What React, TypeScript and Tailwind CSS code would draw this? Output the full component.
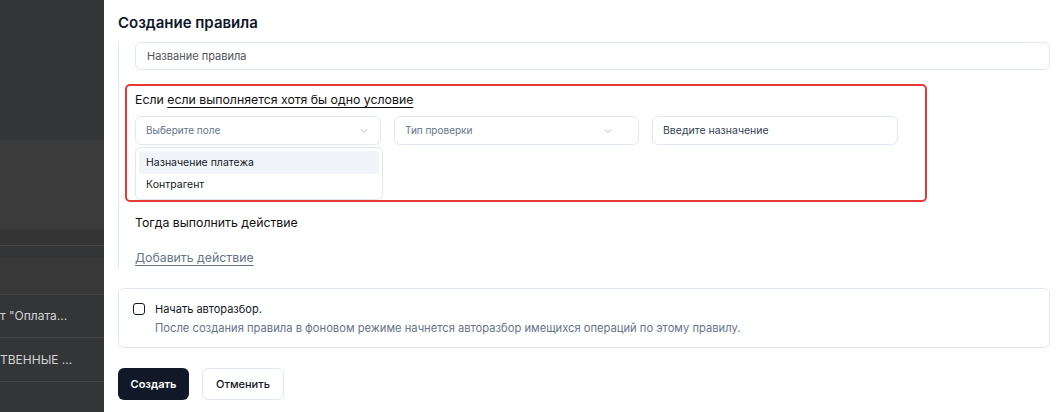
import { ChevronDown } from 'lucide-react';

export default function App() {
  return (
    <div className="flex h-[412px] w-[1064px] overflow-hidden bg-white font-['Inter',sans-serif] text-[#0f172a]">
      {/* Dimmed page behind the drawer */}
      <div className="flex w-[104px] shrink-0 flex-col bg-[#343537] text-[12px] text-[#d4d4d4]">
        <div className="h-[140px]" />
        <div className="h-[90px] bg-[#3b3b3c]" />
        <div className="h-[15px] bg-[#343435]" />
        <div className="h-[12px] border-t border-[#444]" />
        <div className="h-[38px] border-b border-[#444] bg-[#383839]" />
        <div className="flex h-[43px] items-center whitespace-nowrap border-b border-[#444]">
          <span>т "Оплата...</span>
        </div>
        <div className="flex h-[44px] items-center whitespace-nowrap border-b border-[#444]">
          <span>ТВЕННЫЕ ...</span>
        </div>
        <div className="flex-1" />
      </div>

      {/* Drawer */}
      <div className="flex flex-1 flex-col pl-[14px] pr-[14px]">
        <h2 className="pt-[13px] text-[15px] font-semibold leading-[20px]">Создание правила</h2>

        <div className="mt-[9px] h-[226px] overflow-hidden border-l border-[#e2e8f0] pl-[16px]">
          <div className="flex h-[28px] items-center rounded-md border border-[#e2e8f0] px-[11px] text-[11px] text-[#52525b]">
            Название правила
          </div>

          <div className="-ml-[10px] mt-[14px] w-[802px] rounded-[5px] border-2 border-[#e53935] pl-[8px] pt-[5px]">
            <div className="text-[12.3px] leading-[18px] text-[#111]">
              Если <span className="underline underline-offset-[3px]">если выполняется хотя бы одно условие</span>
            </div>
            <div className="mt-[7px] flex gap-[13px]">
              <div className="flex h-[29px] w-[246px] items-center justify-between rounded-md border border-[#e2e8f0] pl-[10px] pr-[10px] text-[10px] text-[#64748b]">
                Выберите поле
                <ChevronDown size={12} strokeWidth={1.5} className="text-[#94a3b8]" />
              </div>
              <div className="flex h-[29px] w-[245px] items-center justify-between rounded-md border border-[#e2e8f0] pl-[10px] pr-[24px] text-[10px] text-[#64748b]">
                Тип проверки
                <ChevronDown size={12} strokeWidth={1.5} className="text-[#94a3b8]" />
              </div>
              <div className="flex h-[29px] w-[246px] items-center rounded-md border border-[#e2e8f0] pl-[10px] text-[10.5px] text-[#334155]">
                Введите назначение
              </div>
            </div>
            <div className="mt-[2px] w-[248px] rounded-md border border-[#e2e8f0] p-[3px] text-[10.5px] text-[#111827]">
              <div className="flex h-[23px] items-center rounded-[3px] bg-[#f1f5f9] px-[7px]">Назначение платежа</div>
              <div className="flex h-[22px] items-center px-[7px]">Контрагент</div>
            </div>
          </div>

          <div className="mt-[12px] text-[12.3px] leading-[18px] text-[#111]">Тогда выполнить действие</div>
          <div className="mt-[17px] text-[12.3px] leading-[18px] text-[#64748b] underline underline-offset-[3px]">
            Добавить действие
          </div>
        </div>

        <div className="mt-[20px] flex h-[60px] gap-[10px] rounded-md border border-[#e2e8f0] pl-[14px] pt-[13px]">
          <div className="mt-[1px] h-[12px] w-[12px] rounded-[3px] border-[1.5px] border-[#111827]" />
          <div className="text-[11px] leading-[14px]">
            <div className="text-[#111827]">Начать авторазбор.</div>
            <div className="mt-[5px] text-[11.2px] text-[#64748b]">
              После создания правила в фоновом режиме начнется авторазбор имещихся операций по этому правилу.
            </div>
          </div>
        </div>

        <div className="mt-[20px] flex gap-[13px]">
          <button className="h-[32px] w-[71px] rounded-md bg-[#111827] text-[11px] font-semibold text-white">
            Создать
          </button>
          <button className="h-[32px] w-[82px] rounded-md border border-[#e2e8f0] text-[11px] font-medium text-[#111827]">
            Отменить
          </button>
        </div>
      </div>
    </div>
  );
}
